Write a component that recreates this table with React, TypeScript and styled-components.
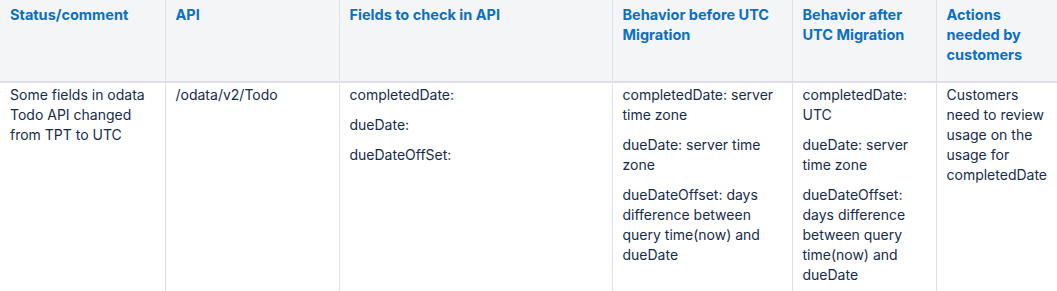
import React from "react";
import styled, { createGlobalStyle } from "styled-components";

const Global = createGlobalStyle`
  html, body { margin: 0; padding: 0; background: #ffffff; overflow: hidden; }
  body { font-family: Inter, "Noto Sans", "Liberation Sans", sans-serif; }
`;

const Table = styled.table`
  border-collapse: collapse;
  table-layout: fixed;
  width: 1059px;
  font-size: 14px;
  line-height: 20px;
  color: #172b4d;
`;

const Col = styled.col<{ $w: number }>`
  width: ${(p) => p.$w}px;
`;

const Th = styled.th`
  background: #f4f5f7;
  color: #0b6fc4;
  font-size: 14.5px;
  font-weight: 700;
  text-align: left;
  vertical-align: top;
  padding: 5px 10px 16px 10px;
  border-left: 1px solid #dfe1e6;
  border-bottom: 2px solid #dfe1e6;
  height: 60px;
  &:first-child { border-left: none; }
`;

const Td = styled.td`
  vertical-align: top;
  padding: 2px 10px 20px 10px;
  border-left: 1px solid #dfe1e6;
  &:first-child { border-left: none; }
`;

const P = styled.p`
  margin: 0 0 10px 0;
  &:last-child { margin-bottom: 0; }
`;

const cols = [165, 174, 273, 180, 144, 123];

export default function App() {
  return (
    <>
      <Global />
      <Table>
        <colgroup>
          {cols.map((w, i) => (
            <Col key={i} $w={w} />
          ))}
        </colgroup>
        <thead>
          <tr>
            <Th>Status/comment</Th>
            <Th>API</Th>
            <Th>Fields to check in API</Th>
            <Th>Behavior before UTC Migration</Th>
            <Th>Behavior after UTC Migration</Th>
            <Th>Actions needed by customers</Th>
          </tr>
        </thead>
        <tbody>
          <tr>
            <Td>
              <P>Some fields in odata Todo API changed from TPT to UTC</P>
            </Td>
            <Td>
              <P>/odata/v2/Todo</P>
            </Td>
            <Td>
              <P>completedDate:</P>
              <P>dueDate:</P>
              <P>dueDateOffSet:</P>
            </Td>
            <Td>
              <P>completedDate: server time zone</P>
              <P>dueDate: server time zone</P>
              <P>dueDateOffset: days difference between query time(now) and dueDate</P>
            </Td>
            <Td>
              <P>completedDate: UTC</P>
              <P>dueDate: server time zone</P>
              <P>dueDateOffset: days difference between query time(now) and dueDate</P>
            </Td>
            <Td>
              <P>Customers need to review usage on the usage for completedDate</P>
            </Td>
          </tr>
        </tbody>
      </Table>
    </>
  );
}
